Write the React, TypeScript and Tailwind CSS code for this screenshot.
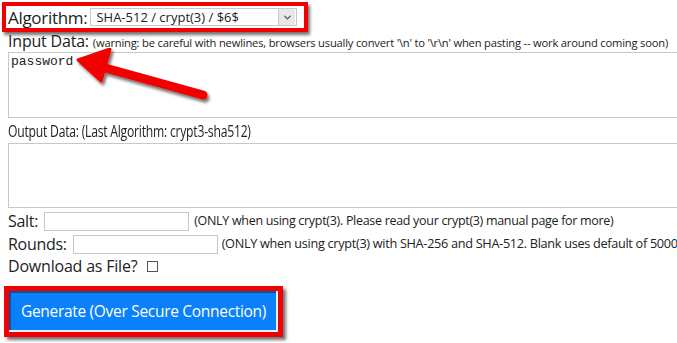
import { ChevronDown } from 'lucide-react';

// Hash generator form with red annotation boxes and arrow drawn over it.
export default function App() {
  return (
    <div className="relative w-[677px] h-[343px] overflow-hidden bg-white text-[#222] font-['Open_Sans',sans-serif]">
      <div className="pl-[2px] pt-[2px]">
        <div className="inline-flex items-center h-[30px] border-4 border-[#f20000] pl-[2px] pr-[7px] shadow-[2px_3px_3px_rgba(0,0,0,0.55)]">
          <span className="text-[17px] leading-none tracking-[-0.3px]">Algorithm:</span>
          <div className="ml-[3px] flex items-center w-[207px] h-[18px] border border-[#c8c8c8] bg-white">
            <span className="pl-[5px] text-[13px] leading-none flex-1">SHA-512 / crypt(3) / $6$</span>
            <div className="flex items-center justify-center w-[17px] h-[16px] bg-[#e8e8e8] border-l border-[#c8c8c8] mr-px">
              <ChevronDown size={11} strokeWidth={3} className="text-[#555]" />
            </div>
          </div>
        </div>
      </div>

      <div className="pl-2">
        <div className="flex items-baseline h-[18px] mt-[1px] whitespace-nowrap">
          <span className="text-[16px] leading-none tracking-[-0.2px]">Input Data:</span>
          <span className="ml-[4px] text-[11.2px] tracking-[-0.2px]">
            (warning: be careful with newlines, browsers usually convert '\n' to '\r\n' when pasting -- work around coming soon)
          </span>
        </div>
        <div className="mt-[1px] w-[700px] h-[66px] border border-[#c8c8c8] px-[2px] pt-[1px] font-['Liberation_Mono',monospace] text-[13px] leading-[16px]">
          password
        </div>

        <div className="mt-[3px] h-[20px] text-[16px] leading-[20px] tracking-[-0.3px] whitespace-nowrap origin-left scale-x-[0.76]">
          Output Data: (Last Algorithm: crypt3-sha512)
        </div>
        <div className="mt-[2px] w-[700px] h-[65px] border border-[#c8c8c8]" />

        <div className="mt-[3px] flex items-center h-[20px] whitespace-nowrap">
          <span className="text-[16px] tracking-[-0.3px]">Salt:</span>
          <div className="ml-[6px] w-[145px] h-[19px] border border-[#c8c8c8] shrink-0" />
          <span className="ml-[5px] text-[12.5px] tracking-[-0.3px]">
            (ONLY when using crypt(3). Please read your crypt(3) manual page for more)
          </span>
        </div>
        <div className="mt-[3px] flex items-center h-[20px] whitespace-nowrap">
          <span className="text-[16px] tracking-[-0.3px]">Rounds:</span>
          <div className="ml-[6px] w-[145px] h-[19px] border border-[#c8c8c8] shrink-0" />
          <span className="ml-[4px] text-[12.7px] tracking-[-0.3px]">
            (ONLY when using crypt(3) with SHA-256 and SHA-512. Blank uses default of 5000
          </span>
        </div>
        <div className="mt-[1px] flex items-center h-[22px]">
          <span className="text-[16px] tracking-[-0.2px]">Download as File?</span>
          <div className="ml-[10px] w-[11px] h-[11px] border border-[#555]" />
        </div>
      </div>

      <div className="pl-[4px] mt-[9px]">
        <div className="inline-flex border-[5px] border-[#f20000] shadow-[3px_3px_3px_rgba(0,0,0,0.55)]">
          <div className="flex items-center justify-center w-[269px] h-[41px] bg-[#0a80fb] text-white text-[15.5px] tracking-[-0.3px] shadow-[inset_-2px_-2px_0_rgba(255,255,255,0.9),inset_2px_2px_0_rgba(0,0,0,0.35)]">
            Generate (Over Secure Connection)
          </div>
        </div>
      </div>

      <svg className="absolute left-[70px] top-[48px]" width="150" height="60" viewBox="0 0 150 60">
        <defs>
          <filter id="sh" x="-20%" y="-40%" width="140%" height="180%">
            <feDropShadow dx="2" dy="3" stdDeviation="1.8" floodColor="#000" floodOpacity="0.55" />
          </filter>
        </defs>
        <g filter="url(#sh)">
          <line x1="133" y1="47" x2="28" y2="18" stroke="#f20000" strokeWidth="9" strokeLinecap="round" />
          <polygon points="8,12 40,1 31,33" fill="#f20000" stroke="#f20000" strokeWidth="3" strokeLinejoin="round" />
        </g>
      </svg>
    </div>
  );
}
